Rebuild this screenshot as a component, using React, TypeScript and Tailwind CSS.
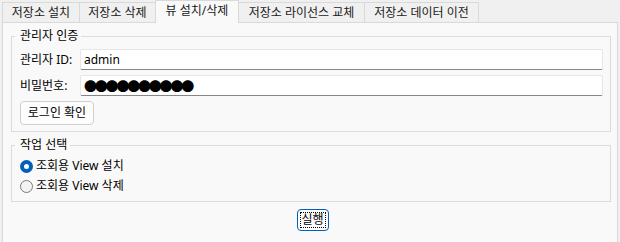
import React from "react";

function Tab({ label, w, selected, first }: { label: string; w: string; selected?: boolean; first?: boolean }) {
  return (
    <div
      className={
        (selected
          ? "h-[23px] -mb-px bg-[#f9f9f9] relative z-10 "
          : "h-[20px] bg-[#f0f0f0] ") +
        (first ? "" : "-ml-px ") +
        w +
        " border border-b-0 border-[#d9d9d9] flex items-center justify-center text-[12px] leading-[16px] text-[#1a1a1a] whitespace-nowrap"
      }
    >
      <span className={selected ? "-mt-[2px]" : ""}>{label}</span>
    </div>
  );
}

function Radio({ checked, label }: { checked?: boolean; label: string }) {
  return (
    <div className="flex items-center h-[20px]">
      {checked ? (
        <div className="w-[13px] h-[13px] rounded-full bg-[#005fb8] flex items-center justify-center">
          <div className="w-[5px] h-[5px] rounded-full bg-white" />
        </div>
      ) : (
        <div className="w-[13px] h-[13px] rounded-full border border-[#7a7a7a] bg-[#f3f3f3]" />
      )}
      <span className="ml-[3px] text-[12px] leading-[16px] text-black">{label}</span>
    </div>
  );
}

export default function App() {
  return (
    <div className="w-[620px] h-[242px] bg-[#f0f0f0] overflow-hidden font-['Noto_Sans','Noto_Sans_CJK_KR',sans-serif]">
      <div className="flex items-end h-[22px] pl-[2px] relative z-10">
        <Tab label="저장소 설치" w="w-[78px]" first />
        <Tab label="저장소 삭제" w="w-[77px]" />
        <Tab label="뷰 설치/삭제" w="w-[84px]" selected />
        <Tab label="저장소 라이선스 교체" w="w-[127px]" />
        <Tab label="저장소 데이터 이전" w="w-[115px]" />
      </div>
      <div className="ml-[2px] w-[616px] h-[222px] border border-[#d9d9d9] bg-[#f9f9f9] pl-[8px] pr-[6px] pt-[5px]">
        <fieldset className="border border-[#dcdcdc] pl-[8px] pr-[7px] pt-[5px] pb-[6px]">
          <legend className="-ml-[5px] pl-[5px] pr-[3px] text-[12px] leading-[16px] text-black">관리자 인증</legend>
          <div className="flex flex-col gap-[5px]">
            <div className="flex items-center">
              <span className="w-[60px] text-[12px] leading-[16px] text-black whitespace-nowrap">관리자 ID:</span>
              <div className="flex-1 h-[21px] bg-white border border-[#e6e6e6] border-b-[#868686] rounded-[2px] flex items-center pl-[3px] text-[12px] leading-[16px] text-black">
                admin
              </div>
            </div>
            <div className="flex items-center">
              <span className="w-[60px] text-[12px] leading-[16px] text-black whitespace-nowrap">비밀번호:</span>
              <div className="flex-1 h-[21px] bg-white border border-[#e6e6e6] border-b-[#868686] rounded-[2px] flex items-center pl-[3px] text-[13px] leading-[16px] text-black tracking-[-2.2px]">
                ●●●●●●●●●●
              </div>
            </div>
            <div className="flex">
              <button className="w-[74px] h-[24px] bg-[#fdfdfd] border border-[#d0d0d0] rounded-[4px] text-[12px] leading-[16px] text-black flex items-center justify-center">
                로그인 확인
              </button>
            </div>
          </div>
        </fieldset>
        <fieldset className="mt-[5px] border border-[#dcdcdc] pl-[8px] pr-[7px] pt-[3px] pb-[5px]">
          <legend className="-ml-[5px] pl-[5px] pr-[3px] text-[12px] leading-[16px] text-black">작업 선택</legend>
          <Radio checked label="조회용 View 설치" />
          <Radio label="조회용 View 삭제" />
        </fieldset>
        <div className="flex justify-center mt-[7px] pl-[3px]">
          <button className="w-[32px] h-[22px] border border-[#005fb8] rounded-[4px] bg-[#fdfdfd] p-[2px]">
            <div className="w-full h-full border border-dotted border-black flex items-center justify-center text-[12px] leading-[14px] text-black">
              실행
            </div>
          </button>
        </div>
      </div>
    </div>
  );
}
